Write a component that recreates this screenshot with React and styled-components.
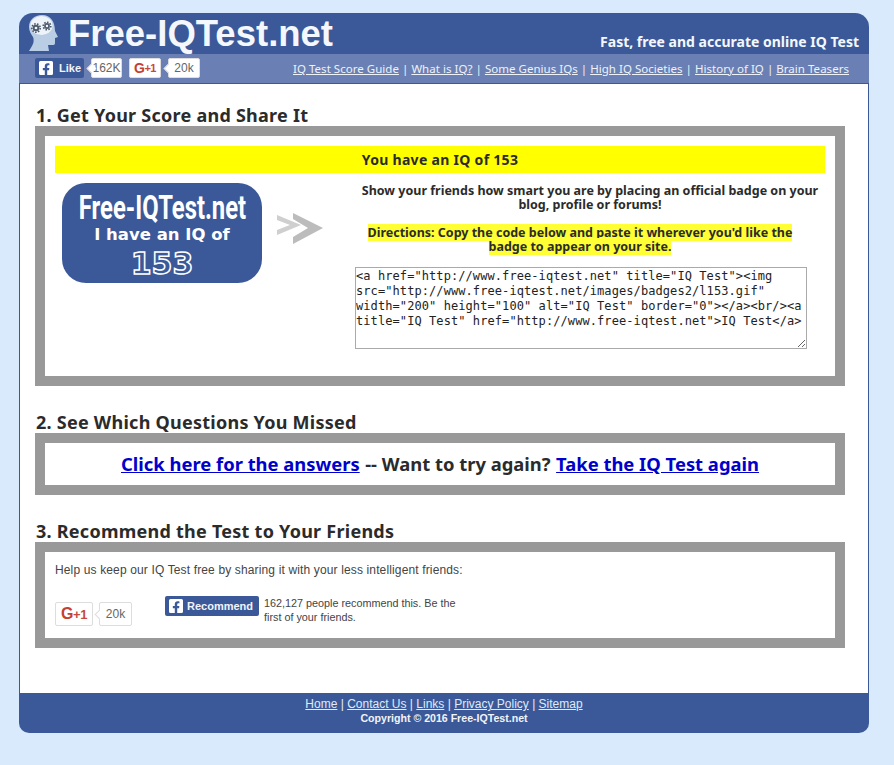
import styled, { createGlobalStyle } from "styled-components";
import { FaFacebookSquare } from "react-icons/fa";

const GlobalStyle = createGlobalStyle`
  body {
    margin: 0;
    background: #d8eafb;
    font-family: "Noto Sans", "DejaVu Sans", sans-serif;
    color: #2b2b2b;
  }
`;

const Page = styled.div`
  width: 850px;
  margin: 13px 0 32px 19px;
`;
const Masthead = styled.header`
  height: 41px;
  background: #3b5998;
  border-radius: 14px 14px 0 0;
  display: flex;
  align-items: flex-start;
  justify-content: space-between;
  padding: 0 10px 0 9px;
  box-sizing: border-box;
`;
const Brand = styled.div`
  display: flex;
  align-items: flex-start;
  gap: 10px;
  padding-top: 2px;
`;
const BrandName = styled.div`
  font-family: "Liberation Sans", Arial, sans-serif;
  font-weight: 700;
  font-size: 36.5px;
  line-height: 38px;
  color: #f4f7fb;
`;
const Tagline = styled.div`
  font-weight: 700;
  font-size: 14px;
  line-height: 18px;
  color: #f4f7fb;
  padding-top: 20px;
`;
const SubBar = styled.div`
  height: 30px;
  background: #6a80b4;
  border-bottom: 1px solid #3b5998;
  box-sizing: border-box;
  display: flex;
  align-items: center;
  justify-content: space-between;
  padding: 0 20px 0 16px;
`;
const SocialRow = styled.div`
  display: flex;
  align-items: center;
  gap: 7px;
  margin-top: -2px;
`;
const LikeButton = styled.div`
  display: flex;
  align-items: center;
  gap: 5px;
  height: 20px;
  width: 49px;
  padding-left: 3px;
  box-sizing: border-box;
  background: #3b5998;
  border-radius: 2px;
  color: #f1f4fa;
  font: 700 11px "Liberation Sans", Arial, sans-serif;
`;
const PlusButton = styled.div`
  display: flex;
  align-items: center;
  justify-content: center;
  box-sizing: border-box;
  width: ${(p) => (p.$large ? "38px" : "32px")};
  height: ${(p) => (p.$large ? "24px" : "20px")};
  background: #fff;
  border: 1px solid #ddd;
  border-radius: 2px;
  color: #c8493c;
  font: 700 ${(p) => (p.$large ? "13px" : "11px")} "Liberation Sans", Arial, sans-serif;
  letter-spacing: -0.5px;
  b {
    font-size: ${(p) => (p.$large ? "16px" : "14px")};
    color: #c5402f;
  }
`;
const Count = styled.div`
  position: relative;
  display: flex;
  align-items: center;
  justify-content: center;
  box-sizing: border-box;
  width: ${(p) => p.$w}px;
  height: ${(p) => (p.$large ? "24px" : "20px")};
  background: #fff;
  border: 1px solid #ddd;
  border-radius: 2px;
  color: #666;
  font: 12px "Liberation Sans", Arial, sans-serif;
  &::before {
    content: "";
    position: absolute;
    left: -4px;
    top: 50%;
    width: 6px;
    height: 6px;
    margin-top: -3px;
    background: #fff;
    transform: rotate(45deg);
    border-left: 1px solid #ddd;
    border-bottom: 1px solid #ddd;
  }
`;
const NavLinks = styled.nav`
  font-size: 11.5px;
  letter-spacing: 0.03px;
  color: #eef2f9;
  white-space: pre;
  a {
    color: #eef2f9;
  }
`;
const Main = styled.main`
  background: #fff;
  border-left: 1px solid #3b5998;
  border-right: 1px solid #3b5998;
  box-sizing: border-box;
  padding: 20px 23px 45px 15px;
`;
const Section = styled.section`
  margin-bottom: 25px;
  &:last-child {
    margin-bottom: 0;
  }
`;
const Heading = styled.h2`
  margin: 0;
  padding-left: 1px;
  font-size: 18px;
  line-height: 22px;
  font-weight: 700;
  letter-spacing: 0.25px;
  color: #2b2b2b;
`;
const Frame = styled.div`
  border: 10px solid #999;
  background: #fff;
  box-sizing: border-box;
  height: ${(p) => p.$h}px;
  padding: ${(p) => p.$pad || "0"};
`;
const Banner = styled.div`
  height: 27px;
  background: #ffff00;
  display: flex;
  align-items: center;
  justify-content: center;
  font-size: 14px;
  font-weight: 700;
  letter-spacing: 0.3px;
`;
const ShareGrid = styled.div`
  display: flex;
  margin-top: 10px;
`;
const BadgeCol = styled.div`
  width: 300px;
  flex: none;
  display: flex;
  align-items: flex-start;
  padding-left: 7px;
  box-sizing: border-box;
  gap: 15px;
`;
const Badge = styled.div`
  width: 200px;
  height: 100px;
  flex: none;
  border-radius: 24px;
  background: #3b5998;
  color: #fff;
  display: flex;
  flex-direction: column;
  align-items: center;
  overflow: hidden;
`;
const BadgeTitle = styled.div`
  font-family: "Roboto", sans-serif;
  font-weight: 700;
  font-size: 34px;
  line-height: 36px;
  margin-top: 6px;
  white-space: nowrap;
  transform: scaleX(0.7);
`;
const BadgeLine = styled.div`
  font-family: "DejaVu Sans", sans-serif;
  font-weight: 700;
  font-size: 16.5px;
  line-height: 20px;
`;
const BadgeScore = styled.div`
  font-family: "DejaVu Sans", sans-serif;
  font-weight: 700;
  font-size: 30px;
  line-height: 30px;
  margin-top: 4px;
  color: #3b5998;
  -webkit-text-stroke: 1.5px #fff;
`;
const ArrowIcon = styled.svg`
  width: 47px;
  height: 34px;
  margin-top: 29px;
  flex: none;
`;
const InfoCol = styled.div`
  width: 470px;
  text-align: center;
  font-size: 12.5px;
  line-height: 14px;
  font-weight: 700;
  color: #2b2b2b;
`;
const Blurb = styled.p`
  margin: 1px 0 14px;
`;
const Directions = styled.p`
  margin: 0 0 13px 10px;
  width: 430px;
  span {
    background: #ffff33;
  }
`;
const CodeBox = styled.textarea`
  display: block;
  width: 452px;
  height: 82px;
  box-sizing: border-box;
  padding: 1px 0;
  border: 1px solid #aaa;
  font-family: "DejaVu Sans Mono", monospace;
  font-size: 12px;
  line-height: 15px;
  letter-spacing: 0.08px;
  color: #222;
  background: #fff;
`;
const Answers = styled.div`
  height: 41px;
  display: flex;
  align-items: center;
  justify-content: center;
  gap: 0.3em;
  font-size: 18.4px;
  font-weight: 700;
  a {
    color: #0000cc;
  }
`;
const HelpText = styled.p`
  margin: 0;
  font: 12px/16px "Liberation Sans", Arial, sans-serif;
  color: #444;
  letter-spacing: 0.14px;
`;
const RecommendRow = styled.div`
  display: flex;
  align-items: flex-start;
  margin-top: 18px;
`;
const PlusGroup = styled.div`
  display: flex;
  gap: 6px;
  margin-top: 6px;
  width: 110px;
  flex: none;
`;
const RecommendButton = styled.div`
  display: flex;
  align-items: center;
  gap: 3px;
  box-sizing: border-box;
  width: 94px;
  height: 20px;
  padding-left: 3px;
  background: #3b5998;
  border-radius: 2px;
  color: #f1f4fa;
  font: 700 11px "Liberation Sans", Arial, sans-serif;
`;
const RecommendText = styled.div`
  width: 205px;
  margin-left: 5px;
  font: 10.8px/14px "Liberation Sans", Arial, sans-serif;
  color: #444;
`;
const Footer = styled.footer`
  height: 40px;
  background: #3b5998;
  border-radius: 0 0 10px 10px;
  text-align: center;
  font-family: "Liberation Sans", Arial, sans-serif;
  color: #e9f0fb;
  padding-top: 4px;
  box-sizing: border-box;
`;
const FooterLinks = styled.div`
  font-size: 12px;
  line-height: 15px;
  a {
    color: #dfeafa;
  }
`;
const Copyright = styled.div`
  font-size: 10.6px;
  line-height: 13px;
  font-weight: 700;
  color: #f1f4fa;
`;

const Gear = ({ x, y, r }) => (
  <g>
    <circle cx={x} cy={y} r={r + 0.6} fill="none" stroke="#4c5a6c" strokeWidth="1.6" strokeDasharray="1.6 1.3" />
    <circle cx={x} cy={y} r={r - 0.3} fill="#4c5a6c" />
    <circle cx={x} cy={y} r={r * 0.38} fill="#eef3fa" />
  </g>
);

const HeadLogo = () => (
  <svg width="30" height="37" viewBox="0 0 30 37" style={{ flex: "none" }}>
    <path
      d="M14 0C6 0 1 5 1 12c0 4 2 7 4 10 1 2 1 6-1 9l-3 5h20l-1-6h5c2 0 2-1 2-3v-4l3-1-3-6C27 7 23 0 14 0z"
      fill="#b9cde4"
    />
    <ellipse cx="13.5" cy="10.5" rx="11" ry="9.5" fill="#eef3fa" />
    <Gear x={8} y={13} r={3.6} />
    <Gear x={19} y={11} r={3.2} />
  </svg>
);

const navItems = [
  "IQ Test Score Guide",
  "What is IQ?",
  "Some Genius IQs",
  "High IQ Societies",
  "History of IQ",
  "Brain Teasers",
];
const footerItems = ["Home", "Contact Us", "Links", "Privacy Policy", "Sitemap"];

const code = `<a href="http://www.free-iqtest.net" title="IQ Test"><img src="http://www.free-iqtest.net/images/badges2/l153.gif" width="200" height="100" alt="IQ Test" border="0"></a><br/><a title="IQ Test" href="http://www.free-iqtest.net">IQ Test</a>`;

const App = () => {
  return (
    <Page>
      <GlobalStyle />
      <Masthead>
        <Brand>
          <HeadLogo />
          <BrandName>Free-IQTest.net</BrandName>
        </Brand>
        <Tagline>Fast, free and accurate online IQ Test</Tagline>
      </Masthead>
      <SubBar>
        <SocialRow>
          <LikeButton>
            <FaFacebookSquare size={16} color="#fff" />
            Like
          </LikeButton>
          <Count $w={31}>162K</Count>
          <PlusButton>
            <b>G</b>+1
          </PlusButton>
          <Count $w={32}>20k</Count>
        </SocialRow>
        <NavLinks>
          {navItems.map((item, i) => (
            <span key={item}>
              {i > 0 && " | "}
              <a href="#">{item}</a>
            </span>
          ))}
        </NavLinks>
      </SubBar>
      <Main>
        <Section>
          <Heading>1. Get Your Score and Share It</Heading>
          <Frame $h={260} $pad="10px">
            <Banner>You have an IQ of 153</Banner>
            <ShareGrid>
              <BadgeCol>
                <Badge>
                  <BadgeTitle>Free-IQTest.net</BadgeTitle>
                  <BadgeLine>I have an IQ of</BadgeLine>
                  <BadgeScore>153</BadgeScore>
                </Badge>
                <ArrowIcon viewBox="0 0 47 34">
                  <path d="M0 3l24 10L0 23v-5l13-5L0 8z" fill="#cfcfcf" />
                  <path d="M16 1l30 15-30 16v-7l15-9-15-9z" fill="#bcbcbc" />
                </ArrowIcon>
              </BadgeCol>
              <InfoCol>
                <Blurb>Show your friends how smart you are by placing an official badge on your blog, profile or forums!</Blurb>
                <Directions>
                  <span>Directions: Copy the code below and paste it wherever you'd like the badge to appear on your site.</span>
                </Directions>
                <CodeBox readOnly value={code} />
              </InfoCol>
            </ShareGrid>
          </Frame>
        </Section>
        <Section>
          <Heading>2. See Which Questions You Missed</Heading>
          <Frame $h={62}>
            <Answers>
              <a href="#">Click here for the answers</a> -- Want to try again? <a href="#">Take the IQ Test again</a>
            </Answers>
          </Frame>
        </Section>
        <Section>
          <Heading>3. Recommend the Test to Your Friends</Heading>
          <Frame $h={106} $pad="10px">
            <HelpText>Help us keep our IQ Test free by sharing it with your less intelligent friends:</HelpText>
            <RecommendRow>
              <PlusGroup>
                <PlusButton $large>
                  <b>G</b>+1
                </PlusButton>
                <Count $w={33} $large>20k</Count>
              </PlusGroup>
              <RecommendButton>
                <FaFacebookSquare size={16} color="#fff" />
                Recommend
              </RecommendButton>
              <RecommendText>162,127 people recommend this. Be the first of your friends.</RecommendText>
            </RecommendRow>
          </Frame>
        </Section>
      </Main>
      <Footer>
        <FooterLinks>
          {footerItems.map((item, i) => (
            <span key={item}>
              {i > 0 && " | "}
              <a href="#">{item}</a>
            </span>
          ))}
        </FooterLinks>
        <Copyright>Copyright © 2016 Free-IQTest.net</Copyright>
      </Footer>
    </Page>
  );
};

export default App;
